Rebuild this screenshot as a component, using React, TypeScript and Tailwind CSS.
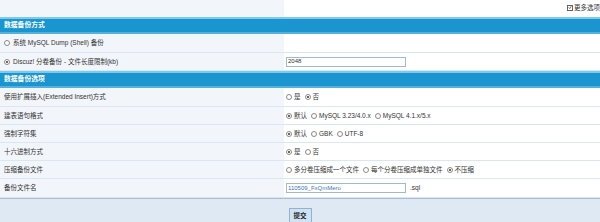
import { ReactNode } from "react";

const Radio = ({ checked = false }: { checked?: boolean }) => (
  <span className="inline-flex size-[6px] shrink-0 items-center justify-center rounded-full border border-[#8a8a8a] bg-white">
    {checked && <span className="size-[2px] rounded-full bg-[#333]" />}
  </span>
);

const Opt = ({ label, checked }: { label: string; checked?: boolean }) => (
  <span className="inline-flex items-center gap-[2px]">
    <Radio checked={checked} />
    <span>{label}</span>
  </span>
);

const Header = ({ title }: { title: string }) => (
  <div className="col-span-2 flex h-[17px] items-center border-t-2 border-b-2 border-t-[#7ccbec] border-b-[#55b0dc] bg-[#1a95d0] px-[4px] text-[6.8px] font-bold text-white">
    {title}
  </div>
);

const Row = ({ label, children, h = "h-[18px]" }: { label: ReactNode; children?: ReactNode; h?: string }) => (
  <>
    <div className={`${h} flex items-center gap-[3px] border-b border-[#d9e7f2] bg-[#f2f6fa] px-[4px]`}>{label}</div>
    <div className={`${h} flex items-center gap-[4px] border-b border-[#d9e7f2] bg-white px-[2px]`}>{children}</div>
  </>
);

export default function App() {
  return (
    <div
      className="h-[222px] w-[600px] overflow-hidden bg-white text-[6.5px] text-[#333]"
      style={{ fontFamily: '"Liberation Sans", "Noto Sans CJK SC", sans-serif' }}
    >
      <div className="grid grid-cols-[284px_1fr]">
        <div className="h-[17px] bg-[#f2f6fa]" />
        <div className="flex h-[17px] items-start justify-end pt-[3px]">
          <span className="inline-flex items-center gap-[1px]">
            <span className="flex size-[6px] items-center justify-center border border-[#666] bg-white">
              <svg viewBox="0 0 6 6" className="size-[5px]">
                <path d="M1 3 L2.5 4.5 L5 1" fill="none" stroke="#222" strokeWidth="1" />
              </svg>
            </span>
            <span>更多选项</span>
          </span>
        </div>

        <Header title="数据备份方式" />
        <Row h="h-[19px]" label={<><Radio /><span>系统 MySQL Dump (Shell) 备份</span></>} />
        <Row
          label={<><Radio checked /><span>Discuz! 分卷备份 - 文件长度限制(kb)</span></>}
        >
          <div className="flex h-[10px] w-[120px] items-center border border-[#9fbccf] bg-white px-[1px] text-[6px] text-[#333]">
            2048
          </div>
        </Row>

        <Header title="数据备份选项" />
        <Row h="h-[19px]" label="使用扩展插入(Extended Insert)方式">
          <Opt label="是" />
          <Opt label="否" checked />
        </Row>
        <Row label="建表语句格式">
          <Opt label="默认" checked />
          <Opt label="MySQL 3.23/4.0.x" />
          <Opt label="MySQL 4.1.x/5.x" />
        </Row>
        <Row label="强制字符集">
          <Opt label="默认" checked />
          <Opt label="GBK" />
          <Opt label="UTF-8" />
        </Row>
        <Row label="十六进制方式">
          <Opt label="是" checked />
          <Opt label="否" />
        </Row>
        <Row label="压缩备份文件">
          <Opt label="多分卷压缩成一个文件" />
          <Opt label="每个分卷压缩成单独文件" />
          <Opt label="不压缩" checked />
        </Row>
        <Row h="h-[19px]" label="备份文件名">
          <div className="flex h-[10px] w-[120px] items-center border border-[#9fbccf] bg-white px-[1px] text-[6px] text-[#3a78b8]">
            110509_FxQmMero
          </div>
          <span>.sql</span>
        </Row>
      </div>
      <div className="flex h-[26px] justify-center border-t border-[#a8bfd2] bg-[#dfe9f4] pt-[9px]">
        <button className="flex h-[16px] w-[23px] items-center justify-center border border-[#8fb4d2] bg-[#cfe3f5] text-[6.5px] font-bold text-[#222]">
          提交
        </button>
      </div>
    </div>
  );
}
